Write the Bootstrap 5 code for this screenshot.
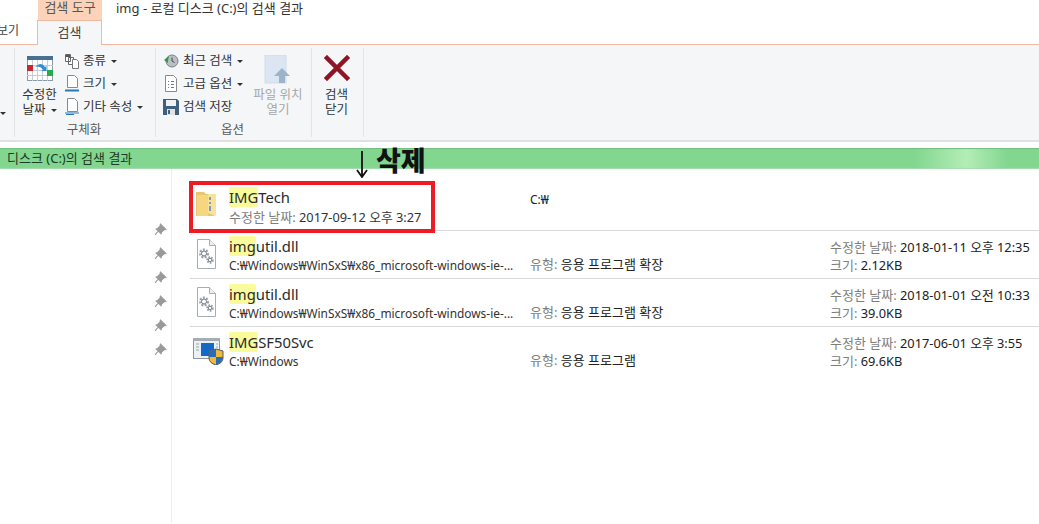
<!DOCTYPE html>
<html lang="ko">
<head>
<meta charset="utf-8">
<title>img 검색 결과</title>
<link rel="stylesheet" href="https://cdn.jsdelivr.net/npm/bootstrap@5.3.0/dist/css/bootstrap.min.css">
<style>
html,body{height:100%;overflow:hidden}
body{background:#fff;color:#222;font-family:"Noto Sans","Noto Sans CJK KR",sans-serif;font-size:13px;line-height:1.2;position:relative}
.topbar{height:45px;border-bottom:1px solid #f0b9a0}
.viewtab{width:37px;padding-top:24px;color:#444;padding-right:18px;white-space:nowrap;justify-content:flex-end;font-size:12px}
.ctxcol{width:65px}
.ctxhead{height:20px;background:#fcd2b8;color:#555;text-align:center;line-height:15px;margin-left:1px}
.ctxtab{height:25px;background:#f5f6f7;border:1px solid #f0b9a0;border-bottom:0;text-align:center;line-height:23px;color:#444;margin-bottom:-1px;position:relative}
.wintitle{padding:1px 0 0 14px;color:#333;line-height:15px}
.ribbon{height:97px;background:#f5f6f7;border-bottom:2px solid #dfe0e2;font-size:12.5px}
.rgroup{border-right:1px solid #e2e3e4;margin-top:3px;margin-bottom:3px}
.g0{width:15px;padding-top:57px}
.g1{width:141px}
.g2{width:156px}
.g3{width:52px}
.rbody{height:77px}
.rlabel{text-align:center;color:#5a5a5a;line-height:14px;height:14px;padding-right:2px}
.bigbtn{text-align:center;color:#333;line-height:15px}
.bigbtn svg{display:block;margin:0 auto 6px}
.stackbtn{height:23px;white-space:nowrap;color:#333}
.stackbtn svg{flex:none}
.stacktext{margin-left:-1px}
.caret{display:inline-block;border-left:3px solid transparent;border-right:3px solid transparent;border-top:3px solid #333;margin-left:5px;vertical-align:2px}
.muted-btn{color:#a6a6a6}
.pathbar{height:21px;margin-top:6px;background:linear-gradient(90deg,#82d690 0,#82d690 88%,#b4edb6 93%,#82d690 97%);color:#1d3a24;line-height:20px;padding-left:7px;box-shadow:inset 0 2px 1px -1px #6fbf7e,inset 0 -2px 1px -1px #a5dcae}
.mainarea{height:354px}
.navpane{width:172px;border-right:1px solid #eeeeee;padding-top:54px}
.pinrow{height:24px;padding-right:4px}
.results{padding:13px 0 0 18px}
.resrow{height:48px;border-bottom:1px solid #d9d9d9}
.resrow:last-child{border-bottom:0}
.ricon{width:39px;padding:8px 0 0 4px}
.rmain{width:301px;padding-top:6px;min-width:0}
.rname{font-size:14.8px;line-height:19px;color:#2a2a2a}
.hit{background:#fbfb9c;border-radius:2px}
.rsub{line-height:17px;margin-top:1px;white-space:nowrap;color:#333;font-size:11.9px}
.rsub.dated{font-size:12.8px;margin-top:2px}
.lbl{color:#7d7d7d;font-size:13px}
.rtype{width:300px;padding-top:26px}
.rtype.solo{padding-top:11px;font-size:12px}
.rmeta{line-height:18px;white-space:nowrap;padding-top:7px;font-size:12.8px}
.redbox{position:absolute;left:189px;top:181px;width:246px;height:52px;border:4px solid #ed1c24}
.delnote{position:absolute;left:356px;top:145px;font-size:27px;font-weight:900;color:#111;line-height:30px;white-space:nowrap;font-family:"Noto Sans CJK KR",sans-serif;display:flex;align-items:flex-start}
.delnote svg{margin:6px 8px 0 0}
</style>
</head>
<body>
<div class="topbar d-flex">
  <div class="viewtab d-flex">보기</div>
  <div class="ctxcol">
    <div class="ctxhead">검색 도구</div>
    <div class="ctxtab">검색</div>
  </div>
  <div class="wintitle">img - 로컬 디스크 (C:)의 검색 결과</div>
</div>

<div class="ribbon d-flex">
  <div class="rgroup g0"><span class="caret ms-0"></span></div>

  <div class="rgroup g1 d-flex flex-column">
    <div class="rbody d-flex">
      <div class="bigbtn" style="width:49px;padding-top:8px">
        <svg width="26" height="25" viewBox="0 0 26 25"><rect x=".5" y=".5" width="25" height="24" fill="#fff" stroke="#8b9aa8"/><rect x="0" y="0" width="26" height="4" fill="#4a6f94"/><path d="M0 9.500h26M0 14.500h26M0 19.500h26M5.500 4v21M10.500 4v21M15.500 4v21M20.500 4v21" stroke="#c5ced6"/><rect x="0" y="9" width="6" height="6" fill="#c8272d"/><rect x="20" y="14" width="6" height="6" fill="#2aa84a"/><path d="M8 11q6-6 10 0l1.500-1v5h-5l1.500-1.500q-3-4-8-2.500z" fill="#2f8fd6"/></svg>
        수정한<br>날짜<span class="caret"></span>
      </div>
      <div class="flex-grow-1" style="padding-top:1px">
        <div class="stackbtn d-flex align-items-center"><svg width="16" height="16" viewBox="0 0 16 16" class="me-1"><path d="M1.500 1.500h5v7h-5zM4.500 4.500h5v7h-5z" fill="#fff" stroke="#666"/><path d="M8.500 6.500h4l2 2v7h-6z" fill="#fff" stroke="#777"/><path d="M2 2h4v2H2z" fill="#555"/></svg><span class="stacktext">종류<span class="caret"></span></span></div>
        <div class="stackbtn d-flex align-items-center"><svg width="16" height="17" viewBox="0 0 16 17" class="me-1"><path d="M3.500.5h7l3 3v9h-10z" fill="#fff" stroke="#8a8a8a"/><path d="M1 15.500h14" stroke="#2a78b8" stroke-width="2"/></svg><span class="stacktext">크기<span class="caret"></span></span></div>
        <div class="stackbtn d-flex align-items-center"><svg width="16" height="17" viewBox="0 0 16 17" class="me-1"><path d="M3.500.5h7l3 3v10h-10z" fill="#fff" stroke="#8a8a8a"/><path d="M1 15h14" stroke="#2a78b8"/><path d="M2 16.500h8" stroke="#2a78b8"/></svg><span class="stacktext">기타 속성<span class="caret"></span></span></div>
      </div>
    </div>
    <div class="rlabel">구체화</div>
  </div>

  <div class="rgroup g2 d-flex flex-column">
    <div class="rbody d-flex">
      <div style="width:104px;padding:1px 0 0 7px">
        <div class="stackbtn d-flex align-items-center"><svg width="16" height="16" viewBox="0 0 16 16" class="me-1"><circle cx="9" cy="8" r="6" fill="#b9bfc4" stroke="#7a8288"/><path d="M9 4.500V8l2.500 1.500" stroke="#444" fill="none"/><path d="M6 3 1 7l4 3V8z" fill="#2f9a46"/></svg><span>최근 검색<span class="caret"></span></span></div>
        <div class="stackbtn d-flex align-items-center"><svg width="16" height="17" viewBox="0 0 16 17" class="me-1"><path d="M2.500.5h8l3 3v13h-11z" fill="#fff" stroke="#8a8a8a"/><path d="M5 6.500h1M8 6.500h3M5 9.500h1M8 9.500h3M5 12.500h1M8 12.500h3" stroke="#777"/></svg><span>고급 옵션<span class="caret"></span></span></div>
        <div class="stackbtn d-flex align-items-center"><svg width="16" height="16" viewBox="0 0 16 16" class="me-1"><path d="M0 0h14l2 2v14H0z" fill="#3f5f7d"/><rect x="3" y="1" width="10" height="6" fill="#eef2f5"/><rect x="4" y="10" width="8" height="6" fill="#dfe3e6"/><rect x="5" y="11" width="2" height="4" fill="#3f5f7d"/></svg><span>검색 저장</span></div>
      </div>
      <div class="bigbtn muted-btn flex-grow-1" style="padding-top:7px;margin-left:-15px">
        <svg width="30" height="29" viewBox="0 0 30 29" style="margin-bottom:3px"><rect x="2" y="0" width="21" height="28" fill="#dce6f2" stroke="#d0dcea"/><path d="M19 13l8 8h-5v7h-6v-7h-5z" fill="#9db3cc"/></svg>
        파일 위치<br>열기
      </div>
    </div>
    <div class="rlabel">옵션</div>
  </div>

  <div class="rgroup g3">
    <div class="bigbtn" style="padding:7px 2px 0 0">
      <svg width="26" height="26" viewBox="0 0 26 26" style="margin-bottom:6px"><path d="M3 3 23 23M23 3 3 23" stroke="#8f1424" stroke-width="4.500" stroke-linecap="square"/></svg>
      검색<br>닫기
    </div>
  </div>
</div>

<div class="pathbar overflow-hidden">디스크 (C:)의 검색 결과</div>

<div class="mainarea d-flex">
  <div class="navpane">
    <div class="pinrow d-flex justify-content-end"><svg width="13" height="13" viewBox="0 0 12 12"><path d="M6 1l5 5-2 .5L7 8.500 6.500 10 2 5.500l1.500-.5 2-2zM3.800 7.500 1 11" fill="#9a9a9a" stroke="#9a9a9a"/></svg></div>
    <div class="pinrow d-flex justify-content-end"><svg width="13" height="13" viewBox="0 0 12 12"><path d="M6 1l5 5-2 .5L7 8.500 6.500 10 2 5.500l1.500-.5 2-2zM3.800 7.500 1 11" fill="#9a9a9a" stroke="#9a9a9a"/></svg></div>
    <div class="pinrow d-flex justify-content-end"><svg width="13" height="13" viewBox="0 0 12 12"><path d="M6 1l5 5-2 .5L7 8.500 6.500 10 2 5.500l1.500-.5 2-2zM3.800 7.500 1 11" fill="#9a9a9a" stroke="#9a9a9a"/></svg></div>
    <div class="pinrow d-flex justify-content-end"><svg width="13" height="13" viewBox="0 0 12 12"><path d="M6 1l5 5-2 .5L7 8.500 6.500 10 2 5.500l1.500-.5 2-2zM3.800 7.500 1 11" fill="#9a9a9a" stroke="#9a9a9a"/></svg></div>
    <div class="pinrow d-flex justify-content-end"><svg width="13" height="13" viewBox="0 0 12 12"><path d="M6 1l5 5-2 .5L7 8.500 6.500 10 2 5.500l1.500-.5 2-2zM3.800 7.500 1 11" fill="#9a9a9a" stroke="#9a9a9a"/></svg></div>
    <div class="pinrow d-flex justify-content-end"><svg width="13" height="13" viewBox="0 0 12 12"><path d="M6 1l5 5-2 .5L7 8.500 6.500 10 2 5.500l1.500-.5 2-2zM3.800 7.500 1 11" fill="#9a9a9a" stroke="#9a9a9a"/></svg></div>
  </div>

  <div class="results flex-grow-1">
    <div class="resrow d-flex" style="height:49px">
      <div class="ricon" style="padding-top:6px"><svg width="24" height="30" viewBox="0 0 24 28"><path d="M2 3h8l2 2h8v22H2z" fill="#e9c66f"/><path d="M14 5h8v22l-8-3z" fill="#f9e39a"/><path d="M3 6h11v21H3z" fill="#f6d77f"/><path d="M15 8h2v3h-2zM15 13h2v2h-2zM15 17h2v5h-2z" fill="#7c9cc0"/></svg></div>
      <div class="rmain"><div class="rname"><span class="hit">IMG</span>Tech</div><div class="rsub dated"><span class="lbl">수정한 날짜:</span> 2017-09-12 오후 3:27</div></div>
      <div class="rtype solo">C:₩</div>
    </div>
    <div class="resrow d-flex">
      <div class="ricon"><svg width="24" height="30" viewBox="0 0 24 30"><path d="M3.500.5h12l6 6v23h-18z" fill="#fff" stroke="#a8adb3"/><path d="M15.500.5v6h6" fill="#eef0f2" stroke="#a8adb3"/><circle cx="10" cy="14.500" r="3.500" fill="none" stroke="#9aa0a6" stroke-width="3" stroke-dasharray="1.800 1.200"/><circle cx="10" cy="14.500" r="2.500" fill="none" stroke="#7f868d"/><circle cx="16" cy="21" r="2.500" fill="none" stroke="#9aa0a6" stroke-width="2.500" stroke-dasharray="1.500 1"/><circle cx="16" cy="21" r="1.800" fill="none" stroke="#7f868d"/></svg></div>
      <div class="rmain"><div class="rname"><span class="hit">img</span>util.dll</div><div class="rsub">C:₩Windows₩WinSxS₩x86_microsoft-windows-ie-...</div></div>
      <div class="rtype"><span class="lbl">유형:</span> 응용 프로그램 확장</div>
      <div class="rmeta"><span class="lbl">수정한 날짜:</span> 2018-01-11 오후 12:35<br><span class="lbl">크기:</span> 2.12KB</div>
    </div>
    <div class="resrow d-flex">
      <div class="ricon"><svg width="24" height="30" viewBox="0 0 24 30"><path d="M3.500.5h12l6 6v23h-18z" fill="#fff" stroke="#a8adb3"/><path d="M15.500.5v6h6" fill="#eef0f2" stroke="#a8adb3"/><circle cx="10" cy="14.500" r="3.500" fill="none" stroke="#9aa0a6" stroke-width="3" stroke-dasharray="1.800 1.200"/><circle cx="10" cy="14.500" r="2.500" fill="none" stroke="#7f868d"/><circle cx="16" cy="21" r="2.500" fill="none" stroke="#9aa0a6" stroke-width="2.500" stroke-dasharray="1.500 1"/><circle cx="16" cy="21" r="1.800" fill="none" stroke="#7f868d"/></svg></div>
      <div class="rmain"><div class="rname"><span class="hit">img</span>util.dll</div><div class="rsub">C:₩Windows₩WinSxS₩x86_microsoft-windows-ie-...</div></div>
      <div class="rtype"><span class="lbl">유형:</span> 응용 프로그램 확장</div>
      <div class="rmeta"><span class="lbl">수정한 날짜:</span> 2018-01-01 오전 10:33<br><span class="lbl">크기:</span> 39.0KB</div>
    </div>
    <div class="resrow d-flex">
      <div class="ricon" style="padding-left:3px"><svg width="32" height="30" viewBox="0 0 32 30"><rect x=".5" y="3.500" width="26" height="20" fill="#eef1f4" stroke="#8f979e"/><rect x="0" y="3" width="27" height="3" fill="#a5adb4"/><rect x="8" y="8" width="13" height="13" fill="#1469c7"/><path d="M3 9h3M3 12h3M3 15h3M23 9h2M23 12h2" stroke="#9aa4ad"/><path d="M23 14l7 2v7q0 5-7 7-7-2-7-7v-7z" fill="#f0b93a" stroke="#4d5a66"/><path d="M23 14v8h-7v-6zM23 22h7q0 5-7 8z" fill="#2c6cb5"/></svg></div>
      <div class="rmain"><div class="rname"><span class="hit">IMG</span>SF50Svc</div><div class="rsub">C:₩Windows</div></div>
      <div class="rtype"><span class="lbl">유형:</span> 응용 프로그램</div>
      <div class="rmeta"><span class="lbl">수정한 날짜:</span> 2017-06-01 오후 3:55<br><span class="lbl">크기:</span> 69.6KB</div>
    </div>
  </div>
</div>

<div class="redbox"></div>
<div class="delnote"><svg width="12" height="27" viewBox="0 0 12 27"><path d="M6 0v25M1 19l5 7 5-7" fill="none" stroke="#111" stroke-width="1.800"/></svg>삭제</div>
<script src="https://cdn.jsdelivr.net/npm/bootstrap@5.3.0/dist/js/bootstrap.bundle.min.js"></script>
</body>
</html>
